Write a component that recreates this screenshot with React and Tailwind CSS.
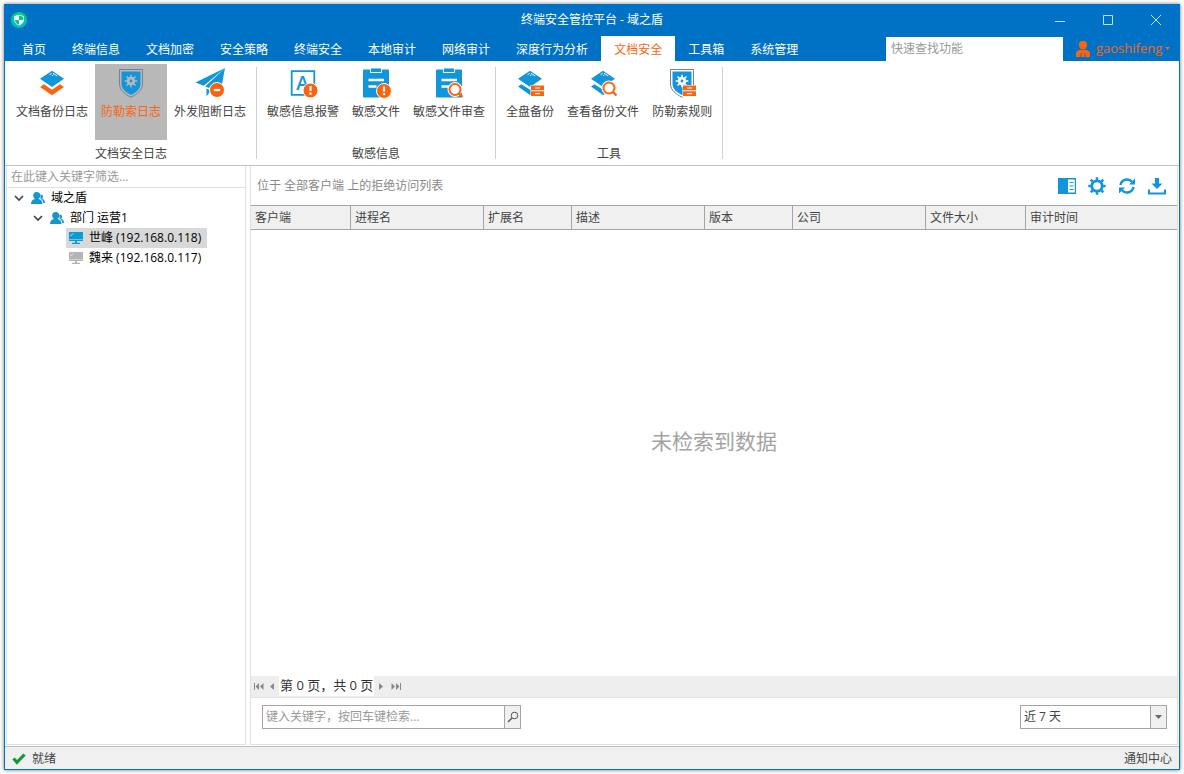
import React, { useState } from "react";

const tabs = [
  "首页",
  "终端信息",
  "文档加密",
  "安全策略",
  "终端安全",
  "本地审计",
  "网络审计",
  "深度行为分析",
  "文档安全",
  "工具箱",
  "系统管理",
];

const BLUE = "#1296db";
const ORANGE = "#fa6410";

// Small overlays shared by the ribbon icons
const AlertBadge = ({ cx, cy }) => (
  <g>
    <circle cx={cx} cy={cy} r="7.5" fill={ORANGE} stroke="#fff" strokeWidth="1" />
    <path d={`M${cx} ${cy - 4.5}v5`} stroke="#fff" strokeWidth="2.2" />
    <path d={`M${cx} ${cy + 2}v2.2`} stroke="#fff" strokeWidth="2.2" />
  </g>
);

const Magnifier = ({ cx, cy }) => (
  <g fill="none">
    <circle cx={cx} cy={cy} r="5.5" fill="#fff" stroke="#fff" strokeWidth="4" />
    <circle cx={cx} cy={cy} r="5.5" stroke={ORANGE} strokeWidth="2" />
    <path d={`M${cx + 4} ${cy + 4}l3.5 3.5`} stroke={ORANGE} strokeWidth="2.4" />
  </g>
);

const Cabinet = () => (
  <g>
    <path d="M16.5 18h14v12h-14z" fill="#fff" />
    <path d="M17 18.5h13v4.7H17zM17 24.3h13v4.7H17z" fill={ORANGE} />
    <path d="M21 21h5M21 26.7h5" stroke="#fff" strokeWidth="1" />
  </g>
);

const TopSheet = () => (
  <g>
    <path d="M16 3.7 28 11.8 16 20 4 11.8z" fill={BLUE} />
    <path d="M13.5 7.8l2.2-1.5M16 8.8l1.6-1.1M17 6.2l4.2 2.8" stroke="#fff" strokeWidth="0.9" fill="none" />
  </g>
);

const Clipboard = () => (
  <g>
    <rect x="3" y="2.5" width="26" height="28" rx="1" fill={BLUE} />
    <rect x="10.5" y="1" width="11" height="4.5" fill={BLUE} stroke="#fff" strokeWidth="0.9" />
    <path d="M8.5 13h15.5M8.5 19.5h8" stroke="#fff" strokeWidth="2.4" />
  </g>
);

const Shield = ({ gap }) => (
  <g>
    <path d="M4.5 2.5h23V17c0 6-5.5 10.300-11.500 13.200C10 27.300 4.500 23 4.500 17z" fill={gap} stroke="#71819f" strokeWidth="1" />
    <path d="M6.5 4.5h19V17c0 5-4.500 8.500-9.500 11-5-2.500-9.500-6-9.500-11z" fill={BLUE} />
    <g stroke={gap} transform="translate(16 14)">
      <circle r="2.8" fill="none" strokeWidth="2.8" />
      <path
        d="M0-6.300V-3M0 3v3.300M-6.300 0H-3M3 0h3.300M-4.500-4.500l2.300 2.300M2.200 2.200l2.300 2.300M-4.500 4.500l2.300-2.300M2.200-2.200l2.300-2.300"
        strokeWidth="1.5"
      />
    </g>
  </g>
);

const ribbonIcons = {
  backupLog: (
    <>
      <TopSheet />
      <path d="M4 20l4-2.700 8 5.400 8-5.400 4 2.700-12 8.300z" fill={ORANGE} />
    </>
  ),
  shield: <Shield gap="#b8b8b8" />,
  plane: (
    <>
      <path d="M31 1 1.500 15.500l8.300 3.300z" fill={BLUE} />
      <path d="M31 1 11.200 19.500 26.500 25z" fill={BLUE} />
      <path d="M12.500 21.700v7.800l4.500-6.200z" fill={BLUE} />
      <circle cx="23" cy="23" r="7.5" fill={ORANGE} stroke="#fff" strokeWidth="1" />
      <path d="M19.800 23h6.400" stroke="#fff" strokeWidth="2.2" />
    </>
  ),
  sensitiveAlert: (
    <>
      <path d="M4.700 4.200h22.600v23.600H4.700z" fill="none" stroke={BLUE} strokeWidth="1.8" />
      <text x="15.5" y="22.5" textAnchor="middle" fontSize="19" fontFamily="Open Sans" fontWeight="600" fill={BLUE}>
        A
      </text>
      <AlertBadge cx={23.5} cy={23.5} />
    </>
  ),
  fileAlert: (
    <>
      <Clipboard />
      <AlertBadge cx={24} cy={24} />
    </>
  ),
  fileReview: (
    <>
      <Clipboard />
      <Magnifier cx={22} cy={22.5} />
    </>
  ),
  diskBackup: (
    <>
      <TopSheet />
      <path d="M4 19.500l3.500-2.300 8.500 5.600 4-2.500v6L16 28z" fill={BLUE} />
      <Cabinet />
    </>
  ),
  backupFiles: (
    <>
      <TopSheet />
      <path d="M4 19.500l3.500-2.300 8.500 5.600 4-2.500v6L16 28z" fill={BLUE} />
      <Magnifier cx={22} cy={21} />
    </>
  ),
  shieldRules: (
    <>
      <Shield gap="#fff" />
      <Cabinet />
    </>
  ),
};

const ribbonGroups = [
  {
    label: "文档安全日志",
    items: [
      { label: "文档备份日志", icon: "backupLog" },
      { label: "防勒索日志", icon: "shield" },
      { label: "外发阻断日志", icon: "plane" },
    ],
  },
  {
    label: "敏感信息",
    items: [
      { label: "敏感信息报警", icon: "sensitiveAlert" },
      { label: "敏感文件", icon: "fileAlert" },
      { label: "敏感文件审查", icon: "fileReview" },
    ],
  },
  {
    label: "工具",
    items: [
      { label: "全盘备份", icon: "diskBackup" },
      { label: "查看备份文件", icon: "backupFiles" },
      { label: "防勒索规则", icon: "shieldRules" },
    ],
  },
];

const columns = [
  { name: "客户端", width: "w-[100px]" },
  { name: "进程名", width: "w-[133px]" },
  { name: "扩展名", width: "w-[88px]" },
  { name: "描述", width: "w-[133px]" },
  { name: "版本", width: "w-[88px]" },
  { name: "公司", width: "w-[133px]" },
  { name: "文件大小", width: "w-[100px]" },
  { name: "审计时间", width: "" },
];

const Logo = () => (
  <svg className="w-4 h-4" viewBox="0 0 16 16">
    <defs>
      <linearGradient id="logo" x1="0" y1="0" x2="0" y2="1">
        <stop offset="0" stopColor="#00d07a" />
        <stop offset="1" stopColor="#00bfc4" />
      </linearGradient>
    </defs>
    <circle cx="8" cy="8" r="8" fill="url(#logo)" />
    <path d="M8 3l4.500 1.500V8c0 2.500-2 4.200-4.500 5.300C5.500 12.200 3.500 10.500 3.500 8V4.500z" fill="none" stroke="#fff" strokeWidth="0.8" />
    <path d="M8 3v5H3.500V4.500zM8 8h4.500c0 2.500-2 4.200-4.500 5.300z" fill="#fff" />
  </svg>
);

const GroupIcon = () => (
  <svg className="w-3.5 h-3" viewBox="0 0 14 12" fill="#1296cc">
    <path d="M9.500 2.500c1.500-.2 2.500.6 2.500 1.900 0 1-.5 1.800-1.300 2.200 2 .5 3.300 1.900 3.300 4.400h-1.700c-.2-2-1-3.300-2.800-4.200z" />
    <ellipse cx="5.700" cy="3.600" rx="3.500" ry="3.600" />
    <path d="M0 12c0-3 1.800-4.500 4-5h3.500c2.200.5 4 2 4 5z" />
  </svg>
);

const MonitorIcon = ({ color }) => (
  <svg className="w-3.5 h-3" viewBox="0 0 14 12">
    <path d="M0 0h14v9H0z" fill={color} />
    <path d="M1.500 4l2.500-2.500" stroke="#fff" strokeWidth="0.8" />
    <path d="M0 7.500h14" stroke="#fff" strokeWidth="0.4" />
    <path d="M6 9h2v2H6zM3 10.700h8V12H3z" fill={color} />
  </svg>
);

const Chevron = () => (
  <svg className="w-2.5 h-2.5" viewBox="0 0 10 10">
    <path d="M1 3l4 4 4-4" fill="none" stroke="#444" strokeWidth="1.7" />
  </svg>
);

const TitleBar = () => (
  <div className="h-8 flex items-center text-white">
    <div className="w-36 pl-[7px]">
      <Logo />
    </div>
    <h1 className="flex-1 text-center text-xs">终端安全管控平台 - 域之盾</h1>
    <div className="w-36 h-full flex">
      <button aria-label="最小化" className="w-12 flex items-center justify-center">
        <svg className="w-3 h-3" viewBox="0 0 12 12">
          <path d="M1 7.500h10" stroke="#c8dff2" />
        </svg>
      </button>
      <button aria-label="最大化" className="w-12 flex items-center justify-center">
        <svg className="w-3 h-3" viewBox="0 0 12 12">
          <path d="M1.500 1.500h9v9h-9z" fill="none" stroke="#c8dff2" />
        </svg>
      </button>
      <button aria-label="关闭" className="w-12 flex items-center justify-center">
        <svg className="w-3 h-3" viewBox="0 0 12 12">
          <path d="M1 1l10 10M11 1L1 11" stroke="#c8dff2" />
        </svg>
      </button>
    </div>
  </div>
);

const TabBar = ({ active, onSelect }) => (
  <div className="h-[25px] flex pl-[5px]">
    <nav className="flex">
      {tabs.map((tab) => (
        <button
          key={tab}
          onClick={() => onSelect(tab)}
          className={`px-[13px] pt-0.5 whitespace-nowrap ${
            tab === active ? "bg-white text-[#fa6410]" : "text-white"
          }`}
        >
          {tab}
        </button>
      ))}
    </nav>
    <input
      type="text"
      aria-label="快速查找功能"
      placeholder="快速查找功能"
      className="ml-auto mt-px w-[177px] bg-white px-[5px] outline-none placeholder:text-[#999]"
    />
    <button className="w-[117px] pl-[13px] flex items-center text-[13px] text-[#fa6410]">
      <svg className="w-3.5 h-4 mr-1.5" viewBox="0 0 14 16" fill="currentColor">
        <ellipse cx="7" cy="4" rx="4" ry="4.2" />
        <path d="M0 16v-3.500C0 10.300 1.800 9 4.300 8.700h5.400c2.500.3 4.300 1.600 4.300 3.800V16z" />
        <path d="M5 16v-4M9 16v-4" stroke="#0072c6" strokeWidth="0.8" />
      </svg>
      gaoshifeng
      <svg className="w-[5px] h-[3px] ml-[3px]" viewBox="0 0 5 3" fill="currentColor">
        <path d="M0 0h5L2.500 3z" />
      </svg>
    </button>
  </div>
);

const Ribbon = ({ active, onSelect }) => (
  <div className="h-[105px] flex pl-px bg-white border-b border-[#c6c6c6]">
    {ribbonGroups.map((group) => (
      <React.Fragment key={group.label}>
        <section className="px-1 pt-[3px] flex flex-col">
          <div className="flex gap-px">
            {group.items.map((item) => (
              <button
                key={item.label}
                onClick={() => onSelect(item.label)}
                className={`h-[76px] px-1.5 pt-[3px] flex flex-col items-center whitespace-nowrap ${
                  item.label === active ? "bg-[#b8b8b8] text-[#fa6410]" : ""
                }`}
              >
                <svg className="w-8 h-8" viewBox="0 0 32 32">
                  {ribbonIcons[item.icon]}
                </svg>
                <span className="mt-[5px] leading-4">{item.label}</span>
              </button>
            ))}
          </div>
          <h2 className="mt-1 leading-5 text-center">{group.label}</h2>
        </section>
        <div className="w-px my-1.5 bg-[#d0d0d0]" />
      </React.Fragment>
    ))}
  </div>
);

const Sidebar = () => (
  <aside className="w-60 shrink-0 border border-t-0 border-[#e0e0e0] text-black">
    <input
      type="text"
      aria-label="筛选"
      placeholder="在此键入关键字筛选..."
      className="block w-full h-[22px] px-1 border-b border-[#e0e0e0] outline-none placeholder:text-[#999]"
    />
    <ul>
      <li>
        <div className="h-5 pl-[7px] flex items-center">
          <Chevron />
          <span className="ml-[7px] mr-1.5">
            <GroupIcon />
          </span>
          域之盾
        </div>
        <ul>
          <li>
            <div className="h-5 pl-[26px] flex items-center">
              <Chevron />
              <span className="ml-[7px] mr-1.5">
                <GroupIcon />
              </span>
              部门 运营1
            </div>
            <ul className="pl-[59px] flex flex-col items-start">
              <li className="h-5 pl-[3px] pr-1.5 flex items-center gap-1.5 bg-[#d8d8d8]">
                <MonitorIcon color="#0d9bd3" />
                世峰 (192.168.0.118)
              </li>
              <li className="h-5 pl-[3px] pr-1.5 flex items-center gap-1.5">
                <MonitorIcon color="#b5b5b5" />
                魏来 (192.168.0.117)
              </li>
            </ul>
          </li>
        </ul>
      </li>
    </ul>
  </aside>
);

const Toolbar = () => (
  <div className="flex gap-3 text-[#1296db]">
    <button aria-label="列">
      <svg className="w-[18px] h-[18px]" viewBox="0 0 18 18">
        <path d="M0 1h18v16H0z" fill="currentColor" />
        <path d="M10 2.500h6.800v13H10z" fill="#fff" />
        <path d="M11.500 5.500h4M11.500 9h4M11.500 12.500h4" stroke="currentColor" strokeWidth="1.2" />
      </svg>
    </button>
    <button aria-label="设置">
      <svg className="w-[18px] h-[18px]" viewBox="0 0 18 18" stroke="currentColor">
        <circle cx="9" cy="9" r="5.2" fill="none" strokeWidth="2.8" />
        <path
          d="M9 9m0-8.700v3M9 14.700v3M.3 9h3M14.700 9h3M2.700 2.700l2.200 2.200M13.100 13.100l2.200 2.200M15.300 2.700l-2.200 2.200M4.900 13.100l-2.200 2.200"
          strokeWidth="2.5"
        />
      </svg>
    </button>
    <button aria-label="刷新">
      <svg className="w-[18px] h-[18px]" viewBox="0 0 18 18">
        <path d="M2.500 8A6.600 6.600 0 0 1 14 4.800M15.500 10A6.600 6.600 0 0 1 4 13.200" fill="none" stroke="currentColor" strokeWidth="2.4" />
        <path d="M17 1.500v6h-6zM1 16.500v-6h6z" fill="currentColor" />
      </svg>
    </button>
    <button aria-label="导出">
      <svg className="w-[18px] h-[18px]" viewBox="0 0 18 18" fill="currentColor">
        <path d="M7 1h4v5.500h3.500L9 12 3.500 6.500H7z" />
        <path d="M0 12.500h2V15.500h14v-3h2v5H0z" />
      </svg>
    </button>
  </div>
);

const Pager = () => (
  <div className="h-[22px] pb-px flex items-center bg-[#eee] border-b border-[#e0e0e0] text-[#888]">
    <button aria-label="首页" className="pl-[3px]">
      <svg className="w-2.5 h-[7px]" viewBox="0 0 10 7" fill="currentColor">
        <path d="M0 0h1v7H0zM5 0v7L1.500 3.500zM9.500 0v7L6 3.500z" />
      </svg>
    </button>
    <button aria-label="上一页" className="ml-1.5 mr-[5px]">
      <svg className="w-1 h-[7px]" viewBox="0 0 4 7" fill="currentColor">
        <path d="M4 0v7L0 3.500z" />
      </svg>
    </button>
    <span className="h-5 leading-[18px] px-px bg-white text-[13px] text-[#333]">第 0 页，共 0 页</span>
    <button aria-label="下一页" className="ml-[5px] mr-2">
      <svg className="w-1 h-[7px]" viewBox="0 0 4 7" fill="currentColor">
        <path d="M0 0v7l4-3.500z" />
      </svg>
    </button>
    <button aria-label="末页">
      <svg className="w-2.5 h-[7px]" viewBox="0 0 10 7" fill="currentColor">
        <path d="M9 0h1v7H9zM5 0v7l3.500-3.500zM.5 0v7L4 3.500z" />
      </svg>
    </button>
  </div>
);

const LogPanel = () => {
  const [range, setRange] = useState("7");

  return (
    <main className="flex-1 flex flex-col border border-t-0 border-[#e0e0e0]">
      <div className="h-[39px] pl-1.5 pr-[11px] flex items-center justify-between text-[#888]">
        <span>位于 全部客户端 上的拒绝访问列表</span>
        <Toolbar />
      </div>
      <table className="w-full table-fixed border-separate border-spacing-0 border-y border-[#a5a5a5]">
        <thead>
          <tr className="h-[23px] bg-[#f0f0f0]">
            {columns.map((col) => (
              <th
                key={col.name}
                className={`${col.width} pl-1 text-left font-normal border-r border-[#a5a5a5] last:border-r-0`}
              >
                {col.name}
              </th>
            ))}
          </tr>
        </thead>
      </table>
      <div className="flex-1 flex items-center justify-center pb-6 text-[21px] text-[#a3a3a3]">
        未检索到数据
      </div>
      <Pager />
      <div className="h-[46px] pl-[11px] pr-2.5 pt-[7px] flex justify-between">
        <form className="w-[259px] h-6 flex border border-[#a5a5a5]" onSubmit={(e) => e.preventDefault()}>
          <input
            type="text"
            aria-label="检索"
            placeholder="键入关键字，按回车键检索..."
            className="flex-1 min-w-0 px-[3px] outline-none placeholder:text-[#999]"
          />
          <button aria-label="搜索" className="w-4 flex items-center justify-center bg-[#f0f0f0] border-l border-[#a5a5a5]">
            <svg className="w-3 h-3" viewBox="0 0 12 12" fill="none" stroke="#555">
              <circle cx="7.5" cy="4.5" r="3.3" strokeWidth="1" />
              <path d="M5 7L1 11" strokeWidth="1.5" />
            </svg>
          </button>
        </form>
        <div className="relative w-[147px] h-6 flex border border-[#a5a5a5]">
          <select
            aria-label="时间范围"
            value={range}
            onChange={(e) => setRange(e.target.value)}
            className="w-full appearance-none pl-[3px] outline-none bg-white"
          >
            <option value="1">今天</option>
            <option value="7">近 7 天</option>
            <option value="30">近 30 天</option>
          </select>
          <span className="absolute right-0 inset-y-0 w-4 flex items-center justify-center bg-[#f0f0f0] border-l border-[#a5a5a5] pointer-events-none">
            <svg className="w-[7px] h-1" viewBox="0 0 7 4" fill="#666">
              <path d="M0 0h7L3.500 4z" />
            </svg>
          </span>
        </div>
      </div>
    </main>
  );
};

const App = () => {
  const [activeTab, setActiveTab] = useState("文档安全");
  const [activeTool, setActiveTool] = useState("防勒索日志");

  return (
    <div className="h-screen p-1 bg-white font-['Open_Sans','Noto_Sans_CJK_SC',sans-serif] text-xs text-[#444]">
      <div className="h-full flex flex-col bg-white shadow-[0_0_4px_#777]">
        <header className="bg-[#0072c6]">
          <TitleBar />
          <TabBar active={activeTab} onSelect={setActiveTab} />
        </header>
        <div className="flex-1 min-h-0 flex flex-col border border-t-0 border-[#0072c6]">
          <Ribbon active={activeTool} onSelect={setActiveTool} />
          <div className="flex-1 min-h-0 flex gap-1 pl-px pr-px pb-px">
            <Sidebar />
            <LogPanel />
          </div>
          <footer className="h-[23px] px-[7px] pt-0.5 flex items-center bg-[#f0f0f0] border-t border-[#c0c0c0]">
            <svg className="w-3.5 h-3 mr-1.5" viewBox="0 0 14 12">
              <path d="M1.500 5.500l3.500 3.800L12.500 1.500" fill="none" stroke="#0d9b3a" strokeWidth="3.2" />
            </svg>
            就绪
            <button className="ml-auto">通知中心</button>
          </footer>
        </div>
      </div>
    </div>
  );
};

export default App;
